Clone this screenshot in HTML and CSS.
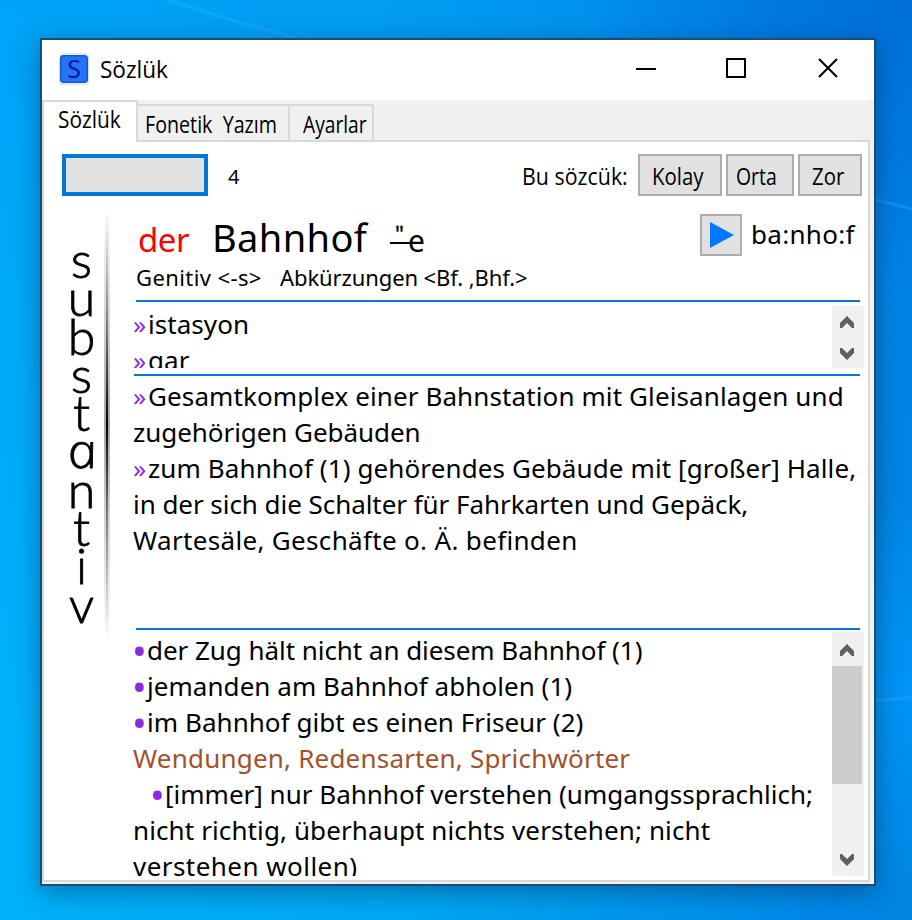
FILE: index.html
```html
<!DOCTYPE html>
<html lang="tr">
<head>
<meta charset="utf-8">
<title>Sözlük</title>
<link rel="stylesheet" href="styles.css">
</head>
<body>
<svg class="wallpaper" viewBox="0 0 912 920" aria-hidden="true">
  <path d="M162 -2 L225 18 L310 42" /><path d="M866 198 L890 203 L914 210" /><path d="M866 702 L914 697" />
</svg>
<main class="window">
  <header class="titlebar">
    <svg class="app-icon" viewBox="0 0 30 32"><rect class="halo" width="30" height="32" rx="3"/><rect class="tile" x="1.7" y="2.7" width="26.6" height="26.6" rx="3"/><text x="15" y="24.5" text-anchor="middle">S</text></svg>
    <span class="title ui">Sözlük</span>
    <svg class="controls" viewBox="0 0 204 24"><path d="M0 13h20" class="bar"/><rect x="91" y="3" width="18" height="18"/><path d="M183 3l18 18M201 3l-18 18"/></svg>
  </header>
  <nav class="tabs ui">
    <div class="tab active"><span>Sözlük</span></div><div class="tab phon"><span>Fonetik&nbsp; Yazım</span></div><div class="tab prefs"><span>Ayarlar</span></div>
  </nav>
  <section class="panel">
    <div class="toolbar ui">
      <div class="search"></div><span class="count">4</span>
      <span class="label">Bu sözcük:</span>
      <button class="kolay"><span>Kolay</span></button><button class="orta"><span>Orta</span></button><button class="zor"><span>Zor</span></button>
    </div>
    <div class="entry">
      <aside class="kind"><div class="letters"><span>s</span><span>u</span><span>b</span><span>s</span><span>t</span><span class="round">a</span><span>n</span><span>t</span><span>i</span><span>v</span></div><div class="shade"></div></aside>
      <div class="body">
        <div class="head">
          <div class="word"><span class="article">der</span><span class="noun">Bahnhof</span><span class="plural"><span class="umlaut">"</span>e</span></div>
          <button class="play"><svg viewBox="0 0 24 26"><path d="M0 0L24 13L0 26Z"/></svg></button>
          <span class="phonetic">ba:nho:f</span>
        </div>
        <div class="forms"><span class="gen">Genitiv &lt;-s&gt;</span><span class="abk">Abkürzungen &lt;Bf. ,Bhf.&gt;</span></div>
        <div class="box meanings">
          <div class="text"><p><b class="q">»</b>istasyon</p><p><b class="q">»</b>gar</p></div>
          <div class="scroll"><svg viewBox="0 0 14 12"><path d="M0 12V7L7 0L14 7V12H12L7 7L2 12Z"/></svg><svg class="down" viewBox="0 0 14 12"><path d="M0 12V7L7 0L14 7V12H12L7 7L2 12Z"/></svg></div>
        </div>
        <div class="box definitions">
          <div class="text"><p class="loose"><b class="q">»</b>Gesamtkomplex einer Bahnstation mit Gleisanlagen und</p><p class="tight">zugehörigen Gebäuden</p><p class="loose"><b class="q">»</b>zum Bahnhof (1) gehörendes Gebäude mit [großer] Halle,</p><p class="tight">in der sich die Schalter für Fahrkarten und Gepäck,</p><p class="wide">Wartesäle, Geschäfte o. Ä. befinden</p></div>
        </div>
        <div class="box examples">
          <div class="text"><p class="tight"><b class="dot">•</b>der Zug hält nicht an diesem Bahnhof (1)</p><p><b class="dot">•</b>jemanden am Bahnhof abholen (1)</p><p><b class="dot">•</b>im Bahnhof gibt es einen Friseur (2)</p><p class="idioms">Wendungen, Redensarten, Sprichwörter</p><p class="indent"><b class="dot">•</b>[immer] nur Bahnhof verstehen (umgangssprachlich;</p><p class="loose">nicht richtig, überhaupt nichts verstehen; nicht</p><p class="last">verstehen wollen)</p></div>
          <div class="scroll tall"><svg viewBox="0 0 14 12"><path d="M0 12V7L7 0L14 7V12H12L7 7L2 12Z"/></svg><i class="thumb"></i><svg class="down" viewBox="0 0 14 12"><path d="M0 12V7L7 0L14 7V12H12L7 7L2 12Z"/></svg></div>
        </div>
      </div>
    </div>
  </section>
</main>
</body>
</html>
```
FILE: styles.css
```css
* { box-sizing: border-box; }
body {
  margin: 0; width: 912px; height: 920px; overflow: hidden; padding: 38px 36px 34px 40px;
  background:
    radial-gradient(ellipse 330px 300px at 100% 0, #006fd8 0, rgba(0,111,216,0) 100%),
    radial-gradient(ellipse 200px 200px at 100% 690px, rgba(0,155,255,.7) 0, rgba(0,155,255,0) 100%),
    linear-gradient(180deg, rgba(0,120,240,.25), rgba(0,120,240,0) 80%),
    linear-gradient(90deg, #00b2fb 0, #00a8f2 45%, #0088e8 90%, #0086e2 100%);
  font-family: "Noto Sans", "Open Sans", sans-serif; color: #000;
}
p { margin: 0; }
button { padding: 0; margin: 0; font: inherit; color: inherit; letter-spacing: inherit; background: #e1e1e1; border: 2px solid #adadad; }
.wallpaper { position: absolute; left: 0; top: 0; width: 912px; height: 920px; fill: none; stroke: #3db4ff; stroke-opacity: .3; stroke-width: 3; }
.window { position: relative; display: flex; flex-direction: column; width: 836px; height: 848px; border: 2px solid #184e70; background: #f0f0f0; box-shadow: 0 6px 24px rgba(0,40,80,.45); }
.ui { font-family: "Open Sans", sans-serif; font-size: 24px; }
.titlebar { display: flex; align-items: center; height: 60px; background: #fff; padding-left: 17px; }
.app-icon { width: 30px; height: 32px; margin-bottom: 3px; }
.halo { fill: #e0eafa; }
.tile { fill: #2474f5; stroke: #145bd0; stroke-width: 1.6; }
.app-icon text { font: 25px "Noto Sans"; fill: #0a18a5; }
.title { margin-left: 11px; margin-bottom: 3px; transform: scaleX(.94); transform-origin: 0 0; }
.controls { width: 204px; height: 24px; margin-left: auto; margin-right: 34px; margin-bottom: 4px; fill: none; stroke: #000; stroke-width: 2; }
.tabs { display: flex; align-items: flex-end; height: 42px; margin-bottom: -2px; position: relative; }
.tab { height: 38px; line-height: 35px; border: 2px solid #d9d9d9; border-left: 0; white-space: nowrap; }
.tab span, .toolbar button span { display: inline-block; transform-origin: 0 50%; }
.active { width: 96px; height: 42px; line-height: 33px; padding-left: 14px; border-left: 2px solid #d9d9d9; border-bottom: 0; background: #fff; }
.active span { transform: scaleX(.87); }
.phon { width: 152px; padding-left: 7px; }
.phon span { transform: scaleX(.82); }
.prefs { width: 84px; padding-left: 13px; }
.prefs span { transform: scaleX(.8); }
.panel { flex: 1; margin: 0 4px 2px 0; border: 2px solid #d9d9d9; background: #fff; padding: 12px 0 0 18px; }
.toolbar { display: flex; align-items: center; height: 42px; padding-right: 6px; }
.search { width: 146px; height: 42px; border: 4px solid #0078d7; background: #e1e1e1; }
.count { font: 20px "Noto Sans"; margin-left: 20px; margin-top: 2px; }
.label { margin-left: auto; margin-right: 10px; transform: scaleX(.89); transform-origin: 100% 50%; }
.toolbar button { height: 42px; margin-right: 4px; text-align: left; padding-left: 12px; white-space: nowrap; overflow: hidden; }
.toolbar button:last-child { margin-right: 0; }
.kolay { width: 84px; } .orta { width: 68px; } .zor { width: 64px; }
.kolay span { transform: scaleX(.85); }
.toolbar .orta { padding-left: 8px; }
.orta span { transform: scaleX(.81); }
.zor span { transform: scaleX(.85); }
.entry { display: flex; height: 684px; }
.kind { display: flex; width: 71px; height: 460px; padding-top: 14px; }
.letters { display: flex; flex-direction: column; align-items: center; width: 39px; padding-top: 30px; font: 300 50px/38.3px Lato, sans-serif; -webkit-text-stroke: .8px #000; }
.letters span { height: 38.3px; }
.round { font-family: "Open Sans", sans-serif; font-size: 48px; font-style: italic; transform: skewX(12deg) scaleX(1.1); }
.shade { width: 6px; height: 430px; margin-left: 3px; background: linear-gradient(90deg, rgba(255,255,255,.65) 2px, transparent 2px, transparent 4px, rgba(255,255,255,.65) 4px), linear-gradient(#fff, #777 28%, #000 50%, #777 70%, #fff); }
.body { width: 731px; }
.head { display: flex; height: 62px; align-items: flex-start; padding-top: 18px; }
.word { display: flex; align-items: baseline; flex: 1; padding-left: 5px; height: 44px; line-height: 50px; margin-top: -2px; }
.article { width: 74px; font-size: 33px; color: #f00; letter-spacing: -.5px; }
.noun { font-size: 38px; width: 178px; letter-spacing: .4px; }
.plural { position: relative; font-size: 30px; padding-left: 18px; }
.plural::before { content: ""; position: absolute; left: 0; top: 26px; width: 20px; height: 2px; background: #000; }
.umlaut { position: absolute; left: 5px; top: -8px; font-size: 22px; -webkit-text-stroke: .4px #000; }
.play { display: flex; width: 42px; height: 42px; padding: 6px 0 0 8px; }
.play svg { width: 24px; height: 26px; fill: #0078ff; }
.phonetic { width: 122px; padding-left: 9px; font-size: 26px; line-height: 40px; letter-spacing: .3px; }
.forms { display: flex; height: 42px; font-size: 22px; line-height: 38px; padding-left: 3px; white-space: pre; }
.gen { width: 144px; letter-spacing: .4px; }
.abk { letter-spacing: -.1px; }
.box { position: relative; display: flex; justify-content: space-between; border-top: 2px solid #0078d7; width: 724px; margin-left: 3px; }
.text { margin-left: -3px; overflow: hidden; font-size: 26px; line-height: 36px; letter-spacing: .05px; white-space: nowrap; width: 698px; flex: none; }
.scroll { display: flex; flex-direction: column; justify-content: space-between; align-items: flex-start; width: 32px; flex: none; margin-right: -4px; padding: 10px 0 8px 8px; background: #f0f0f0; }
.scroll svg { width: 14px; height: 12px; fill: #606060; }
.down { transform: scaleY(-1); }
.meanings { height: 74px; padding: 4px 0 6px; }
.definitions { height: 254px; padding-top: 2px; width: 726px; margin-left: 1px; }
.definitions .text { margin-left: -1px; width: 730px; }
.examples { height: 248px; padding-top: 2px; }
.examples .text { height: 244px; }
.scroll.tall { height: 244px; padding-top: 12px; padding-bottom: 10px; position: relative; }
.thumb { position: absolute; left: 0; top: 34px; width: 30px; height: 118px; background: #cdcdcd; }
.q, .dot { display: inline-block; font-weight: 400; color: #8a2be2; width: 15px; }
.dot { width: 14px; font-size: 39px; line-height: 0; vertical-align: -5px; text-indent: -1px; }
.loose { letter-spacing: .11px; }
.tight { letter-spacing: -.05px; }
.wide { letter-spacing: .33px; }
.last { letter-spacing: .45px; }
.idioms { color: #a0522d; letter-spacing: .2px; }
.indent { padding-left: 18px; letter-spacing: 0; }
```
